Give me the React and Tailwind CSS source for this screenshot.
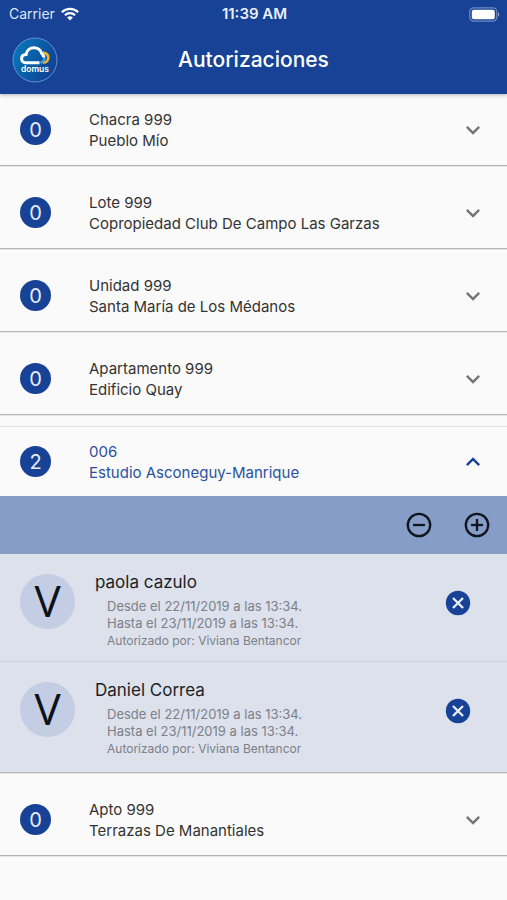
import { useState } from "react";

const units = [
  { id: "chacra", count: 0, unit: "Chacra 999", place: "Pueblo Mío" },
  { id: "lote", count: 0, unit: "Lote 999", place: "Copropiedad Club De Campo Las Garzas" },
  { id: "unidad", count: 0, unit: "Unidad 999", place: "Santa María de Los Médanos" },
  { id: "apartamento", count: 0, unit: "Apartamento 999", place: "Edificio Quay" },
  {
    id: "estudio",
    count: 2,
    unit: "006",
    place: "Estudio Asconeguy-Manrique",
    guests: [
      { name: "paola cazulo", from: "22/11/2019", to: "23/11/2019", by: "Viviana Bentancor" },
      { name: "Daniel Correa", from: "22/11/2019", to: "23/11/2019", by: "Viviana Bentancor" },
    ],
  },
  { id: "apto", count: 0, unit: "Apto 999", place: "Terrazas De Manantiales" },
];

function WifiIcon() {
  return (
    <svg className="h-[14px] w-[18px]" viewBox="0 0 18 14" fill="none" stroke="white" strokeWidth="2.3" aria-hidden="true">
      <path d="M0.9 5.2a11.6 11.6 0 0 1 16.2 0" />
      <path d="M3.9 8.3a7.3 7.3 0 0 1 10.2 0" />
      <path d="M9 13.6 6.1 10.6a4.2 4.2 0 0 1 5.8 0Z" fill="white" stroke="none" />
    </svg>
  );
}

function BatteryIcon() {
  return (
    <svg className="h-[15px] w-[31px]" viewBox="0 0 31 15" aria-hidden="true">
      <rect x="0.8" y="0.8" width="27" height="13.4" rx="4" fill="none" stroke="#6f8bc2" strokeWidth="1.2" />
      <rect x="2.8" y="2.8" width="23" height="9.4" rx="2" fill="white" />
      <path d="M29 5.3c1.6.6 1.6 3.8 0 4.4Z" fill="#8ba3d0" />
    </svg>
  );
}

function Logo() {
  return (
    <svg className="size-[46px]" viewBox="0 0 46 46" role="img" aria-label="domus">
      <defs>
        <linearGradient id="disc" x1="0" y1="0.2" x2="1" y2="0.7">
          <stop offset="0" stopColor="#0878bb" />
          <stop offset="0.5" stopColor="#0a5ca8" />
          <stop offset="1" stopColor="#123f93" />
        </linearGradient>
      </defs>
      <circle cx="23" cy="23" r="22" fill="url(#disc)" stroke="#6f98cf" strokeWidth="0.9" />
      <path d="M31 15.6c3.3.4 5.3 2.5 5.3 5.2 0 2.9-2.2 4.9-5.2 4.9" fill="none" stroke="#f5b71d" strokeWidth="2.6" />
      <path d="M29 16.2c2.6.5 3.7 2.3 3.5 4.7-.2 2.5-1.7 4.4-4.2 4.8" fill="none" stroke="#3fa3dc" strokeWidth="2.4" />
      <path
        d="M27.5 25.8H14.2c-2.8 0-4.6-1.8-4.6-4.1 0-2.4 1.8-4.1 4.5-4.2.6-4.1 3.8-6.8 7.9-6.8 3.7 0 6.8 2.4 7.6 5.7 1.4 1 2.1 2.4 1.9 4"
        fill="none"
        stroke="white"
        strokeWidth="3"
      />
      <text x="23" y="34.5" textAnchor="middle" fontFamily="Inter, sans-serif" fontWeight="600" fontSize="8.5" fill="white">
        domus
      </text>
    </svg>
  );
}

function Chevron({ open }) {
  return (
    <svg
      className={open ? "size-7 rotate-180 text-[#174296]" : "size-7 text-[#757575]"}
      viewBox="0 0 24 24"
      fill="currentColor"
      aria-hidden="true"
    >
      <path d="M16.59 8.59 12 13.17 7.41 8.59 6 10l6 6 6-6z" />
    </svg>
  );
}

function CircleButton({ label, plus }) {
  return (
    <button type="button" aria-label={label} className="flex size-[30px] items-center justify-center text-[#10151f]">
      <svg className="size-[30px]" viewBox="0 0 30 30" fill="none" stroke="currentColor" strokeWidth="2.3" aria-hidden="true">
        <circle cx="15" cy="15" r="11.2" />
        <path d="M9 15h12" />
        {plus && <path d="M15 9v12" />}
      </svg>
    </button>
  );
}

function Guest({ guest }) {
  return (
    <li className="flex h-[108px] items-start border-b border-[#ccd4e2] pl-5 pr-9 last:border-transparent">
      <span className="mt-5 flex size-[55px] shrink-0 items-center justify-center rounded-full bg-[#c3cde3] pb-1 font-['Open_Sans',sans-serif] text-[44px] leading-none text-[#0d1118]">
        V
      </span>
      <div className="ml-5 mt-4 min-w-0 flex-1">
        <h2 className="text-[17px] leading-6 text-[#1b1f27]">{guest.name}</h2>
        <div className="ml-3 mt-1 text-[#7b8089]">
          <p className="text-[13px] leading-[17px]">Desde el {guest.from} a las 13:34.</p>
          <p className="text-[13px] leading-[17px]">Hasta el {guest.to} a las 13:34.</p>
          <p className="text-xs leading-[17px]">Autorizado por: {guest.by}</p>
        </div>
      </div>
      <button type="button" aria-label={`Eliminar ${guest.name}`} className="mt-9 flex size-[26px] items-center justify-center">
        <svg className="size-[26px]" viewBox="0 0 26 26" aria-hidden="true">
          <circle cx="13" cy="13" r="12.2" fill="#174296" />
          <path d="m8 8 10 10M18 8 8 18" stroke="#e9eef7" strokeWidth="2.4" />
        </svg>
      </button>
    </li>
  );
}

function UnitItem({ item, open, onToggle }) {
  return (
    <section
      className={
        "mt-[11px] border-b border-[#b4b4b4] shadow-[0_1px_0_#e6e6e6] first:mt-0" + (open ? " border-t border-t-[#e0e0e0]" : "")
      }
    >
      <button
        type="button"
        aria-expanded={open}
        onClick={onToggle}
        className={"flex w-full items-center pl-5 pr-5 text-left " + (open ? "h-[69px] text-[#2a51a0]" : "h-[71px] text-[#333333]")}
      >
        <span className="flex size-[31px] shrink-0 items-center justify-center rounded-full bg-[#174296] text-xl text-[#e9eef7]">
          {item.count}
        </span>
        <span className="ml-[38px] min-w-0 flex-1 text-[15px] leading-[21px]">
          <span className="block">{item.unit}</span>
          <span className="block">{item.place}</span>
        </span>
        <Chevron open={open} />
      </button>
      {open && (
        <div className="bg-[#dce1eb] pb-[2px]">
          <div className="flex h-[58px] items-center justify-end gap-7 bg-[#869dc7] pr-[15px]">
            <CircleButton label="Quitar" />
            <CircleButton label="Agregar" plus />
          </div>
          <ul>
            {(item.guests || []).map((guest) => (
              <Guest key={guest.name} guest={guest} />
            ))}
          </ul>
        </div>
      )}
    </section>
  );
}

export default function App() {
  const [openId, setOpenId] = useState("estudio");
  return (
    <div className="min-h-screen bg-[#fafafa] font-[Inter,sans-serif]">
      <header className="relative bg-[#174296] text-white shadow-[0_1px_4px_rgba(0,0,0,0.3)]">
        <div className="grid h-7 grid-cols-3 items-center pl-[9px] pr-[7px] text-sm">
          <span className="flex items-center gap-[6px] text-[#dfe6f3]">
            Carrier
            <WifiIcon />
          </span>
          <span className="text-center text-[15px] font-semibold text-[#e9eef7]">11:39 AM</span>
          <span className="flex justify-end">
            <BatteryIcon />
          </span>
        </div>
        <div className="grid h-[66px] grid-cols-[46px_1fr_46px] items-center px-3 pb-[2px]">
          <Logo />
          <h1 className="text-center text-[21px] font-medium">Autorizaciones</h1>
        </div>
      </header>
      <main>
        {units.map((item) => (
          <UnitItem
            key={item.id}
            item={item}
            open={openId === item.id}
            onToggle={() => setOpenId(openId === item.id ? null : item.id)}
          />
        ))}
      </main>
    </div>
  );
}
